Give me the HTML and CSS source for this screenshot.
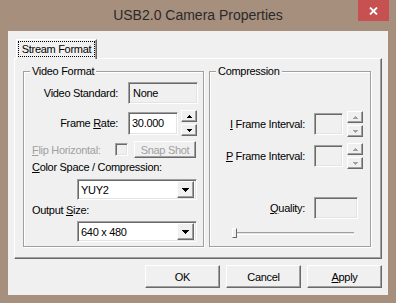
FILE: index.html
```html
<!DOCTYPE html>
<html lang="en">
<head>
  <meta charset="UTF-8" />
  <meta name="viewport" content="width=device-width, initial-scale=1.0" />
  <title>USB2.0 Camera Properties</title>
  <link rel="stylesheet" href="styles.css">
</head>
<body>
  <div class="window">
    <div class="titlebar">
      <span class="titlebar-spacer"></span>
      <h1 class="title">USB2.0 Camera Properties</h1>
      <button class="close" title="Close">
        <svg width="9" height="8" viewBox="0 0 9 8"><path d="M1 0.5 L8 7.5 M8 0.5 L1 7.5" stroke="#fff" stroke-width="1.8" fill="none"/></svg>
      </button>
    </div>

    <div class="client">
      <div class="tabs">
        <div class="tab"><span class="tab-focus">Stream Format</span></div>
      </div>

      <div class="panel">
        <fieldset class="group group-video">
          <legend>Video Format</legend>

          <div class="row row-standard">
            <span class="label">Video Standard:</span>
            <div class="field field-standard">None</div>
          </div>

          <div class="row row-rate">
            <span class="label">Frame <u>R</u>ate:</span>
            <div class="field field-rate">30.000</div>
            <div class="spin">
              <span class="spin-btn"><svg width="5" height="3"><rect x="2" y="0" width="1" height="1"/><rect x="1" y="1" width="3" height="1"/><rect x="0" y="2" width="5" height="1"/></svg></span>
              <span class="spin-btn"><svg width="5" height="3"><rect x="0" y="0" width="5" height="1"/><rect x="1" y="1" width="3" height="1"/><rect x="2" y="2" width="1" height="1"/></svg></span>
            </div>
          </div>

          <div class="row row-flip">
            <span class="label-flip disabled"><u>F</u>lip Horizontal:</span>
            <span class="checkbox"></span>
            <span class="btn btn-snap disabled">Snap Shot</span>
          </div>

          <div class="caption caption-color"><u>C</u>olor Space / Compression:</div>
          <div class="combo">
            <span class="combo-text">YUY2</span>
            <span class="combo-btn"><svg width="7" height="4"><rect x="0" y="0" width="7" height="1"/><rect x="1" y="1" width="5" height="1"/><rect x="2" y="2" width="3" height="1"/><rect x="3" y="3" width="1" height="1"/></svg></span>
          </div>

          <div class="caption caption-size">Output <u>S</u>ize:</div>
          <div class="combo">
            <span class="combo-text">640 x 480</span>
            <span class="combo-btn"><svg width="7" height="4"><rect x="0" y="0" width="7" height="1"/><rect x="1" y="1" width="5" height="1"/><rect x="2" y="2" width="3" height="1"/><rect x="3" y="3" width="1" height="1"/></svg></span>
          </div>
        </fieldset>

        <fieldset class="group group-compression">
          <legend>Compression</legend>

          <div class="row row-iframe">
            <span class="label label-comp"><u>I</u> Frame Interval:</span>
            <div class="field field-interval"></div>
            <div class="spin spin-off">
              <span class="spin-btn"><svg width="5" height="3"><rect x="2" y="0" width="1" height="1"/><rect x="1" y="1" width="3" height="1"/><rect x="0" y="2" width="5" height="1"/></svg></span>
              <span class="spin-btn"><svg width="5" height="3"><rect x="0" y="0" width="5" height="1"/><rect x="1" y="1" width="3" height="1"/><rect x="2" y="2" width="1" height="1"/></svg></span>
            </div>
          </div>

          <div class="row row-pframe">
            <span class="label label-comp"><u>P</u> Frame Interval:</span>
            <div class="field field-interval"></div>
            <div class="spin spin-off">
              <span class="spin-btn"><svg width="5" height="3"><rect x="2" y="0" width="1" height="1"/><rect x="1" y="1" width="3" height="1"/><rect x="0" y="2" width="5" height="1"/></svg></span>
              <span class="spin-btn"><svg width="5" height="3"><rect x="0" y="0" width="5" height="1"/><rect x="1" y="1" width="3" height="1"/><rect x="2" y="2" width="1" height="1"/></svg></span>
            </div>
          </div>

          <div class="row row-quality">
            <span class="label label-comp"><u>Q</u>uality:</span>
            <div class="field field-quality"></div>
          </div>

          <div class="slider">
            <span class="slider-thumb"></span>
            <span class="slider-track"></span>
          </div>
        </fieldset>
      </div>

      <div class="buttons">
        <span class="btn btn-dialog">OK</span>
        <span class="btn btn-dialog">Cancel</span>
        <span class="btn btn-dialog"><u>A</u>pply</span>
      </div>
    </div>
  </div>
</body>
</html>
```

FILE: styles.css
```css
* {
  margin: 0;
  padding: 0;
  box-sizing: border-box;
}

body {
  font-family: 'Liberation Sans', Arial, sans-serif;
  font-size: 11px;
  letter-spacing: -0.3px;
  color: #000;
  background: #a68f7d;
}

.window {
  width: 396px;
  height: 303px;
  display: flex;
  flex-direction: column;
  background: #a68f7d;
}

/* title bar */
.titlebar {
  height: 31px;
  display: grid;
  grid-template-columns: 1fr auto 1fr;
  align-items: start;
}

.title {
  font-size: 14px;
  font-weight: normal;
  line-height: 31px;
  letter-spacing: 0;
  color: #2a2a2a;
}

.close {
  justify-self: end;
  width: 31px;
  height: 21px;
  margin-right: 7px;
  border: none;
  background: #c75050;
  display: flex;
  align-items: center;
  justify-content: center;
}

.close svg {
  display: block;
}

/* client area */
.client {
  flex: 1;
  margin: 0 8px 8px;
  padding: 8px 6px 0;
  background: #f0f0f0;
}

.tabs {
  height: 19px;
  padding-left: 2px;
  display: flex;
}

.tab {
  position: relative;
  z-index: 1;
  width: 81px;
  height: 20px;
  background: #f0f0f0;
  border-top: 1px solid #fff;
  border-left: 1px solid #fff;
  border-right: 1px solid #696969;
  box-shadow: inset -1px 0 0 #a0a0a0;
}

.tab-focus {
  display: block;
  height: 16px;
  margin: 1px 1px 0 1px;
  outline: 1px dotted #000;
  outline-offset: -1px;
  line-height: 16px;
  text-align: center;
}

.panel {
  height: 201px;
  display: flex;
  gap: 5px;
  padding: 6px 10px 11px 8px;
  border: 1px solid;
  border-color: #fff #696969 #696969 #fff;
  box-shadow: inset -1px -1px 0 #a0a0a0;
}

/* group boxes */
.group {
  min-width: 0;
  border: 1px solid #a0a0a0;
  box-shadow: inset 1px 1px 0 #fff, 1px 1px 0 #fff;
  display: flex;
  flex-direction: column;
}

.group legend {
  margin-left: 6px;
  padding: 0 2px;
  line-height: 13px;
  background: #f0f0f0;
}

.group-video {
  width: 181px;
}

.group-compression {
  width: 162px;
}

.row {
  display: flex;
  align-items: center;
}

.label {
  width: 94px;
  text-align: right;
  margin-right: 10px;
  white-space: nowrap;
}

.label-comp {
  width: 95px;
  margin-right: 9px;
}

.disabled {
  color: #a0a0a0;
}

/* sunken fields */
.field {
  height: 22px;
  padding-left: 3px;
  line-height: 20px;
  border: 1px solid;
  border-color: #a0a0a0 #fff #fff #a0a0a0;
  box-shadow: inset 1px 1px 0 #696969, inset -1px -1px 0 #e3e3e3;
  background: #f0f0f0;
}

.row-standard {
  margin-top: 4px;
  height: 22px;
}

.field-standard {
  width: 70px;
  padding-left: 4px;
}

.row-rate {
  margin-top: 6px;
  height: 26px;
}

.field-rate {
  width: 50px;
  height: 23px;
  background: #fff;
  line-height: 21px;
}

.spin {
  width: 16px;
  margin-left: 3px;
  display: flex;
  flex-direction: column;
  gap: 2px;
}

.spin-btn {
  height: 12px;
  display: flex;
  align-items: center;
  justify-content: center;
  background: #f0f0f0;
  border: 1px solid;
  border-color: #fff #696969 #696969 #fff;
  box-shadow: inset -1px -1px 0 #a0a0a0;
}

.spin-btn svg {
  display: block;
  fill: #000;
}

.spin-off .spin-btn svg {
  fill: #a0a0a0;
}

.row-flip {
  margin-top: 5px;
  height: 17px;
  padding-left: 8px;
}

.label-flip {
  width: 83px;
  white-space: nowrap;
}

.checkbox {
  width: 13px;
  height: 13px;
  border: 1px solid;
  border-color: #a0a0a0 #fff #fff #a0a0a0;
  box-shadow: inset 1px 1px 0 #696969, inset -1px -1px 0 #e3e3e3;
  background: #f0f0f0;
}

.btn {
  display: flex;
  align-items: center;
  justify-content: center;
  background: #f0f0f0;
  border: 1px solid;
  border-color: #fff #696969 #696969 #fff;
  box-shadow: inset -1px -1px 0 #a0a0a0;
  white-space: nowrap;
}

.btn-snap {
  width: 62px;
  height: 17px;
  margin-left: 6px;
}

.caption {
  padding-left: 8px;
  line-height: 13px;
}

.caption-color {
  margin-top: 3px;
}

.caption-size {
  margin-top: 4px;
}

/* combo boxes */
.combo {
  width: 120px;
  height: 21px;
  margin: 5px 0 0 53px;
  display: flex;
  align-items: center;
  justify-content: space-between;
  padding: 2px;
  background: #fff;
  border: 1px solid;
  border-color: #a0a0a0 #fff #fff #a0a0a0;
  box-shadow: inset 1px 1px 0 #696969, inset -1px -1px 0 #e3e3e3;
}

.caption-size + .combo {
  margin-top: 4px;
}

.combo-text {
  padding-left: 1px;
}

.combo-btn {
  width: 17px;
  height: 17px;
  display: flex;
  align-items: center;
  justify-content: center;
  background: #f0f0f0;
  border: 1px solid;
  border-color: #fff #696969 #696969 #fff;
  box-shadow: inset -1px -1px 0 #a0a0a0;
}

.combo-btn svg {
  display: block;
  fill: #000;
}

/* compression column */
.row-iframe {
  margin-top: 33px;
  height: 26px;
}

.row-pframe {
  margin-top: 6px;
  height: 26px;
}

.field-interval {
  width: 29px;
}

.row-iframe .spin,
.row-pframe .spin {
  margin-left: 4px;
}

.row-quality {
  margin-top: 28px;
  height: 22px;
}

.field-quality {
  width: 44px;
}

.slider {
  width: 122px;
  height: 14px;
  margin: 7px 0 0 22px;
  display: flex;
  align-items: center;
}

.slider-thumb {
  width: 5px;
  height: 10px;
  background: #f0f0f0;
  border: 1px solid;
  border-color: #fff #696969 #696969 #fff;
}

.slider-track {
  flex: 1;
  height: 3px;
  border-top: 1px solid #a0a0a0;
  border-bottom: 1px solid #fff;
  background: #e3e3e3;
}

/* dialog buttons */
.buttons {
  margin-top: 6px;
  display: flex;
  justify-content: flex-end;
  gap: 6px;
}

.btn-dialog {
  width: 75px;
  height: 23px;
}
```
